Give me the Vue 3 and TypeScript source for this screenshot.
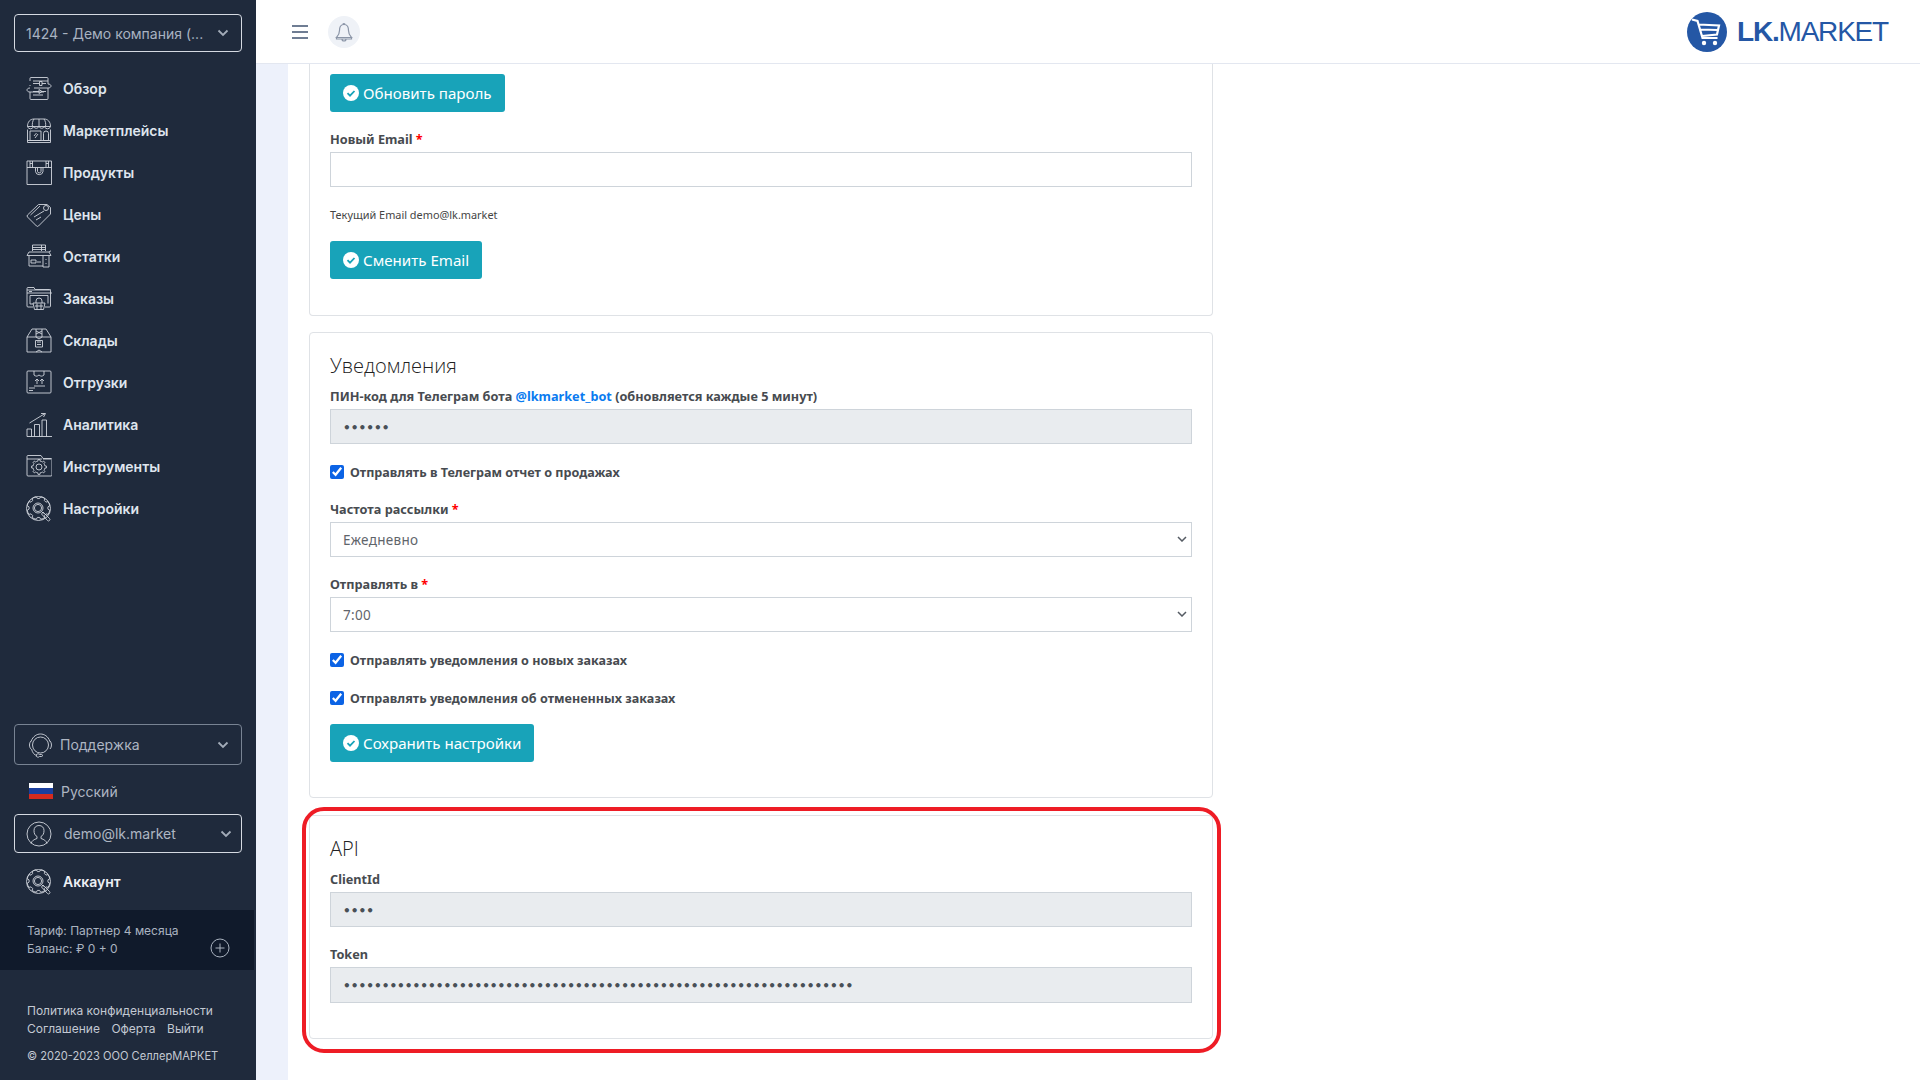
<script setup lang="ts">
function gear(cx: number, cy: number, r1: number, r2: number, n: number): string {
  const pts: string[] = []
  const step = (Math.PI * 2) / n
  for (let i = 0; i < n; i++) {
    const a = i * step
    const list: [number, number][] = [
      [r1, a - step * 0.5],
      [r1, a - step * 0.25],
      [r2, a - step * 0.15],
      [r2, a + step * 0.15],
      [r1, a + step * 0.25],
    ]
    for (const [r, t] of list) {
      pts.push(`${(cx + r * Math.cos(t)).toFixed(2)} ${(cy + r * Math.sin(t)).toFixed(2)}`)
    }
  }
  return 'M' + pts.join('L') + 'Z'
}
function circle(cx: number, cy: number, r: number): string {
  return `M${cx - r} ${cy}a${r} ${r} 0 1 0 ${r * 2} 0a${r} ${r} 0 1 0 ${-r * 2} 0Z`
}

const gearSearch =
  gear(12.5, 12, 11.5, 9.5, 8) +
  circle(12.5, 12.5, 12) +
  circle(12, 12, 5) +
  circle(12, 12, 3.6) +
  'M15.5 15.5l2 2M17 16l6.5 6.5a1.3 1.3 0 0 1-2 2L15.5 18z'

const nav: { label: string; d: string }[] = [
  {
    label: 'Обзор',
    d: 'M4 5V2.5a1 1 0 0 1 1-1h16a1 1 0 0 1 1 1V8M22 12v10.5a1 1 0 0 1-1 1H5a1 1 0 0 1-1-1V16M7 5h15M4 10V9M7 7.5h6M16 7.5h4M13.5 5.5h2.5v4h-2.5zM22 8c2 0 3 1 3 2s-1 2-3 2H8M7 15.5h6M15 15.5h5M13 13.5l3 2-3 2zM4 12c-2 0-3 1-3 2s1 2 3 2h14M7 19h10',
  },
  {
    label: 'Маркетплейсы',
    d: 'M1.5 8.5C1.5 4 4 1 8 1h10c4 0 6.500 3 6.500 7.500M1.500 8.500h23M1.500 8.500a3.100 3.100 0 0 0 6 0a3 3 0 0 0 5.500 0a3 3 0 0 0 5.500 0a3.100 3.100 0 0 0 6 0M8 1C6.500 3 6 6 6.500 8.500M18 1c1.500 2 2 5 1.500 7.500M13 1v7.500M1.500 11.500V24.500h23V11.500M4 13h11v9.500H4zM17.500 22.500v-7a2.500 2.500 0 0 1 5 0v7zM9 20l3-4M8 18l2.500-3M1.500 22.500h23',
  },
  {
    label: 'Продукты',
    d: 'M1 1h24.500v23.500H1zM1 7.500h24.500M4 1v6.500M6.500 1v6.500M20 1v6.500M22.500 1v6.500M4 3.500h2.500M20 3.500h2.500M9.500 8v3.500a3.800 3.800 0 0 0 7.500 0V8M11.500 8v3.500a1.800 1.800 0 0 0 3.500 0V8',
  },
  {
    label: 'Цены',
    d: 'M1.500 13L12.500 2.500H21L24.500 5.500V12L12.500 24a1.500 1.500 0 0 1-2 0L1.500 15a1.500 1.500 0 0 1 0-2zM4.500 13L14 4M8 15l10-6M10 18l5-3' +
      circle(20, 6, 2.5),
  },
  {
    label: 'Остатки',
    d: 'M6.500 7V1h13v6M6.500 3.500h13M6.500 5.500h13M15.500 1v6M3 8h20l2 3.500H1zM3 11.500V22h14M23 11.500V23h-6V11.500M5 16h5v3H5zM11 18h4M20 15v1M20 19v1M23 8a2 2 0 0 1 2-1',
  },
  {
    label: 'Заказы',
    d: 'M1 4V2.500a1 1 0 0 1 1-1h6l1 2h14.500a1 1 0 0 1 1 1V20a1 1 0 0 1-1 1H19M7 21H2a1 1 0 0 1-1-1V4h24M1 7h25M3 5.500h3M4 9.500h18v8M4 9.500V18h3M7 17h12l-1.500 6.500h-9zM10 17v-2a3 3 0 0 1 6 0v2M9 20h8M11 17.500v6M15 17.500v6',
  },
  {
    label: 'Склады',
    d: 'M1 9L6 1h14l5 8M1 9h24v15H1zM10 1v8M16 1v8M10 3l6 3M10 6l6-3M10 9l3 2 3-2M9.500 12.500h7v6.500h-7zM11 14h4M11 16.500h4M10 24l3-2 3 2',
  },
  {
    label: 'Отгрузки',
    d: 'M2 1h22a1 1 0 0 1 1 1v20a1 1 0 0 1-1 1H2a1 1 0 0 1-1-1V2a1 1 0 0 1 1-1zM8 1v4c2 1.500 3 1.500 5 0c2 1.500 3 1.500 5 0V1M9 11l2-2 2 2M11 9v5M14 11l2-2 2 2M16 9v5M8 16h11M3 18h6M3 20.500h4',
  },
  {
    label: 'Аналитика',
    d: 'M1 24.500h25M1 24.500v-7.500h4.500v7.500M8.500 24.500V12.500h5v12M16 24.500V8h4.500v16.500M3.500 11L19 1.500M15 1.500h4.500l-2 3.500',
  },
  {
    label: 'Инструменты',
    d: 'M1 21V2.500a1 1 0 0 1 1-1h13l2 3h8a1 1 0 0 1 1 1V21a1 1 0 0 1-1 1H2a1 1 0 0 1-1-1zM1 5h15M17 5h8' +
      gear(13, 13, 6, 7.5, 8) +
      circle(13, 13, 3),
  },
  { label: 'Настройки', d: gearSearch },
]
const gearD = gearSearch
const tokenValue = '•'.repeat(66)
</script>

<template>
  <div class="app">
    <aside class="sidebar">
      <div class="company">
        <span>1424 - Демо компания (...</span>
        <svg class="chev" width="12" height="8" viewBox="0 0 12 8"><path d="M1.500 1.500L6 6l4.500-4.500" /></svg>
      </div>
      <nav class="nav">
        <a v-for="item in nav" :key="item.label" class="nav-item">
          <svg class="ico" width="26" height="26" viewBox="0 0 26 26"><path :d="item.d" /></svg>
          <span>{{ item.label }}</span>
        </a>
      </nav>
      <div class="bottom">
        <div class="support">
          <svg class="ico" width="26" height="26" viewBox="0 0 26 26">
            <path d="M4.500 13a8 8 0 1 0 16 0a8 8 0 1 0-16 0zM3 9.500C5 4 9 2 12.500 2s7.500 2 9.500 7.500M3 9C1 11 1 15 3 17M22 9c2 2 2 6 0 8M3.500 17c1 4 3 6 5 6.500M8.500 23.500a1.500 1 0 0 1 3-1h2a1 1 0 0 1 0 2h-2a1.500 1 0 0 1-3-1z" />
          </svg>
          <span>Поддержка</span>
          <svg class="chev" width="12" height="8" viewBox="0 0 12 8"><path d="M1.500 1.500L6 6l4.500-4.500" /></svg>
        </div>
        <div class="lang">
          <i class="flag"></i>
          <span>Русский</span>
        </div>
        <div class="user">
          <svg class="ico" width="26" height="26" viewBox="0 0 26 26">
            <path d="M1 13a12 12 0 1 0 24 0a12 12 0 1 0-24 0zM5 22.500c1-3 3-4 6-5v-2c-2-1-3-3-3-6 0-3 2-5 5-5s5 2 5 5c0 3-1 5-3 6v2c3 1 5 2 6 5" />
          </svg>
          <span>demo@lk.market</span>
          <svg class="chev" width="12" height="8" viewBox="0 0 12 8"><path d="M1.500 1.500L6 6l4.500-4.500" /></svg>
        </div>
        <a class="nav-item account">
          <svg class="ico" width="26" height="26" viewBox="0 0 26 26"><path :d="gearD" /></svg>
          <span>Аккаунт</span>
        </a>
        <div class="tariff">
          <div>
            <div>Тариф: Партнер 4 месяца</div>
            <div>Баланс: ₽ 0 + 0</div>
          </div>
          <svg class="plus" width="20" height="20" viewBox="0 0 20 20">
            <path d="M1 10a9 9 0 1 0 18 0a9 9 0 1 0-18 0zM10 5.500v9M5.500 10h9" />
          </svg>
        </div>
        <footer class="foot">
          <div>Политика конфиденциальности</div>
          <div class="foot-links"><span>Соглашение</span><span>Оферта</span><span>Выйти</span></div>
          <div class="copy">© 2020-2023 ООО СеллерМАРКЕТ</div>
        </footer>
      </div>
    </aside>

    <div class="page">
      <header class="topbar">
        <div class="top-left">
          <svg class="burger" width="16" height="14" viewBox="0 0 16 14"><path d="M0 1h16M0 7h16M0 13h16" /></svg>
          <div class="bell">
            <svg width="18" height="20" viewBox="0 0 18 20">
              <path d="M8 2.500a1 1 0 0 1 2 0M9 2.500c-3.500 0-4.500 3-4.500 6 0 3-1 5-3 7h15c-2-2-3-4-3-7 0-3-1-6-4.500-6zM1.500 15.500v1.500h15v-1.500M7 17c0 1.500 1 2 2 2s2-.5 2-2" />
            </svg>
          </div>
        </div>
        <div class="logo">
          <svg width="40" height="40" viewBox="0 0 40 40">
            <circle cx="20" cy="20" r="20" fill="#2457a5" />
            <path d="M5 7.500l5.500 1.500 5 17h15M11.500 12.500l20.500 1-2 9-15 1.500M13 17.500l17.500.5" fill="none" stroke="#fff" stroke-width="2.200" />
            <circle cx="17" cy="31" r="2.200" fill="#fff" />
            <circle cx="28" cy="31" r="2.200" fill="#fff" />
          </svg>
          <div class="logo-text"><b>LK.</b>MARKET</div>
        </div>
      </header>

      <main class="main">
        <div class="content">
          <section class="card first">
            <button class="btn" type="button">
              <svg width="16" height="16" viewBox="0 0 16 16"><circle cx="8" cy="8" r="8" fill="#fff" /><path d="M4.500 8.200l2.500 2.500 4.500-4.700" fill="none" stroke="#18a3b9" stroke-width="1.800" /></svg>
              Обновить пароль
            </button>
            <div class="group spaced">
              <label>Новый Email <em>*</em></label>
              <input class="field" type="text" />
            </div>
            <p class="hint">Текущий Email demo@lk.market</p>
            <button class="btn" type="button">
              <svg width="16" height="16" viewBox="0 0 16 16"><circle cx="8" cy="8" r="8" fill="#fff" /><path d="M4.500 8.200l2.500 2.500 4.500-4.700" fill="none" stroke="#18a3b9" stroke-width="1.800" /></svg>
              Сменить Email
            </button>
          </section>

          <section class="card second">
            <h3>Уведомления</h3>
            <div class="group">
              <label>ПИН-код для Телеграм бота <a class="link">@lkmarket_bot</a> (обновляется каждые 5 минут)</label>
              <input class="field secret" type="password" value="123456" disabled />
            </div>
            <label class="check"><input type="checkbox" checked /><span>Отправлять в Телеграм отчет о продажах</span></label>
            <div class="group">
              <label>Частота рассылки <em>*</em></label>
              <div class="select-wrap">
                <select class="field"><option>Ежедневно</option></select>
                <svg class="select-chev" width="10" height="6" viewBox="0 0 10 6"><path d="M1 1l4 4 4-4" /></svg>
              </div>
            </div>
            <div class="group">
              <label>Отправлять в <em>*</em></label>
              <div class="select-wrap">
                <select class="field"><option>7:00</option></select>
                <svg class="select-chev" width="10" height="6" viewBox="0 0 10 6"><path d="M1 1l4 4 4-4" /></svg>
              </div>
            </div>
            <label class="check"><input type="checkbox" checked /><span>Отправлять уведомления о новых заказах</span></label>
            <label class="check last"><input type="checkbox" checked /><span>Отправлять уведомления об отмененных заказах</span></label>
            <button class="btn" type="button">
              <svg width="16" height="16" viewBox="0 0 16 16"><circle cx="8" cy="8" r="8" fill="#fff" /><path d="M4.500 8.200l2.500 2.500 4.500-4.700" fill="none" stroke="#18a3b9" stroke-width="1.800" /></svg>
              Сохранить настройки
            </button>
          </section>

          <section class="card third">
            <h3>API</h3>
            <div class="group">
              <label>ClientId</label>
              <input class="field secret" type="password" value="1234" disabled />
            </div>
            <div class="group">
              <label>Token</label>
              <input class="field secret tall" type="password" :value="tokenValue" disabled />
            </div>
            <div class="highlight"></div>
          </section>
        </div>
      </main>
    </div>
  </div>
</template>

<style>
html, body { margin: 0; background: #fff; overflow: hidden; }
</style>

<style scoped>
.app { display: flex; width: 1920px; height: 1080px; overflow: hidden; font-family: "Noto Sans", sans-serif; }
.sidebar { width: 256px; flex: none; background: #1f2a3c; display: flex; flex-direction: column; font-family: Inter, sans-serif; color: #e2e8f0; box-sizing: border-box; padding-top: 14px; }
.company { margin: 0 14px; height: 38px; box-sizing: border-box; border: 1px solid #d5dae2; border-radius: 4px; display: flex; align-items: center; justify-content: space-between; padding: 0 12px 0 11px; font-size: 14px; color: #a9b3c1; }
.chev { fill: none; stroke: #a3acb9; stroke-width: 1.800; flex: none; }
.nav { margin-top: 15px; }
.nav-item { display: flex; align-items: center; height: 42px; padding-left: 26px; gap: 11px; font-size: 14px; font-weight: 600; color: #dfe5ee; }
.ico { flex: none; fill: none; stroke: #d0d5dd; stroke-width: .9; }
.nav-item .ico { margin-top: 2px; }
.bottom { margin-top: auto; }
.support { margin: 0 14px; height: 41px; box-sizing: border-box; border: 1px solid #788393; border-radius: 4px; display: flex; align-items: center; padding: 0 12px 0 13px; gap: 6px; font-size: 14px; color: #aeb6c2; }
.support .chev { margin-left: auto; }
.lang { display: flex; align-items: center; height: 24px; margin: 14px 0 11px; padding-left: 29px; gap: 8px; font-size: 14px; color: #aeb6c2; }
.flag { display: block; width: 24px; height: 16px; background: linear-gradient(#fff 0 33%, #1b3f9e 33% 66%, #d52b1e 66%); }
.user { margin: 0 14px; height: 39px; box-sizing: border-box; border: 1px solid #d5dae2; border-radius: 4px; display: flex; align-items: center; padding: 0 9px 0 11px; gap: 12px; font-size: 14px; color: #aeb6c2; }
.user .chev { margin-left: auto; }
.account { margin-top: 7px; font-weight: 600; color: #edf0f5; }
.tariff { margin-top: 8px; width: 254px; height: 60px; box-sizing: border-box; background: #101a2b; display: flex; align-items: center; justify-content: space-between; padding: 0 24px 1px 27px; font-size: 12px; line-height: 18px; color: #aab3c0; }
.plus { fill: none; stroke: #a9b2bf; stroke-width: 1; margin-top: 17px; }
.foot { padding: 32px 0 15px 27px; font-size: 12px; line-height: 18px; color: #c3c9d3; }
.foot-links { display: flex; gap: 11.500px; }
.copy { margin-top: 9px; font-size: 11.100px; }

.page { flex: 1; min-width: 0; display: flex; flex-direction: column; }
.topbar { height: 64px; box-sizing: border-box; border-bottom: 1px solid #e3e7f0; display: flex; align-items: center; justify-content: space-between; background: #fff; padding: 0 32px 0 36px; flex: none; }
.top-left { display: flex; align-items: center; gap: 20px; }
.burger { fill: none; stroke: #6f7d93; stroke-width: 2; }
.bell { width: 32px; height: 32px; border-radius: 50%; background: #eff2f7; display: flex; align-items: center; justify-content: center; }
.bell svg { fill: none; stroke: #8b95a7; stroke-width: 1.200; }
.logo { display: flex; align-items: center; gap: 10px; }
.logo-text { font-family: "Liberation Sans", sans-serif; font-size: 28px; color: #2457a5; letter-spacing: -1.200px; }
.main { flex: 1; min-height: 0; overflow: hidden; background: #fff; display: flex; }
.main::before { content: ""; width: 32px; flex: none; background: #edf1fb; }
.content { width: 904px; margin-left: 21px; }
.card { position: relative; box-sizing: border-box; width: 904px; border: 1px solid #dfe2e6; border-radius: 4px; background: #fff; padding: 20px 20px 17px; }
.card.first { border-top: 0; border-top-left-radius: 0; border-top-right-radius: 0; padding-top: 10px; height: 252px; }
.card.second { margin-top: 16px; padding-bottom: 35px; }
.card.third { margin-top: 17px; }
h3 { margin: 1px 0 9px; font-family: "Open Sans", sans-serif; font-size: 20px; font-weight: 300; line-height: 24px; color: #222; }
.group { margin-bottom: 18px; display: block; }
.group.spaced { margin-top: 18px; }
.group > label { display: block; margin-bottom: 3px; font-size: 12.700px; line-height: 19px; font-weight: 700; color: #474b50; }
.group em { color: #f00; font-style: normal; }
.link { color: #0a7bf0; }
.field { display: block; width: 100%; height: 35px; box-sizing: border-box; border: 1px solid #ced4da; border-radius: 0; padding: 0 12px; background: #fff; font-family: "Noto Sans", sans-serif; font-size: 13.500px; color: #5f656b; outline: none; }
.secret { font-family: "DejaVu Sans", sans-serif; font-size: 12.100px; font-weight: 700; padding-top: 2px; }
.tall { height: 36px; }
.select-wrap { position: relative; }
select.field { appearance: none; padding: 0 12px; letter-spacing: .3px; }
.select-chev { position: absolute; right: 5px; top: 14px; fill: none; stroke: #555b63; stroke-width: 1.500; pointer-events: none; }
.field:disabled { background: #e9ecef; color: #495057; }
.hint { margin: 0 0 16px; font-size: 10.900px; line-height: 20px; color: #444; }
.check { display: flex; align-items: center; height: 20px; margin-bottom: 18px; gap: 6px; font-size: 12.600px; font-weight: 700; color: #474b50; }
.check.last { margin-bottom: 16px; }
.check input { margin: 0; width: 14px; height: 14px; accent-color: #0b63e5; }
.btn { display: flex; align-items: center; gap: 4px; height: 38px; box-sizing: border-box; border: 0; border-radius: 3px; background: #18a3b9; color: #fff; padding: 0 13px; font-family: "Noto Sans", sans-serif; font-size: 15.100px; font-weight: 400; }
.highlight { position: absolute; top: -9px; left: -8px; right: -9px; bottom: -15px; border: 4px solid #ee1c25; border-radius: 22px; pointer-events: none; }
</style>
